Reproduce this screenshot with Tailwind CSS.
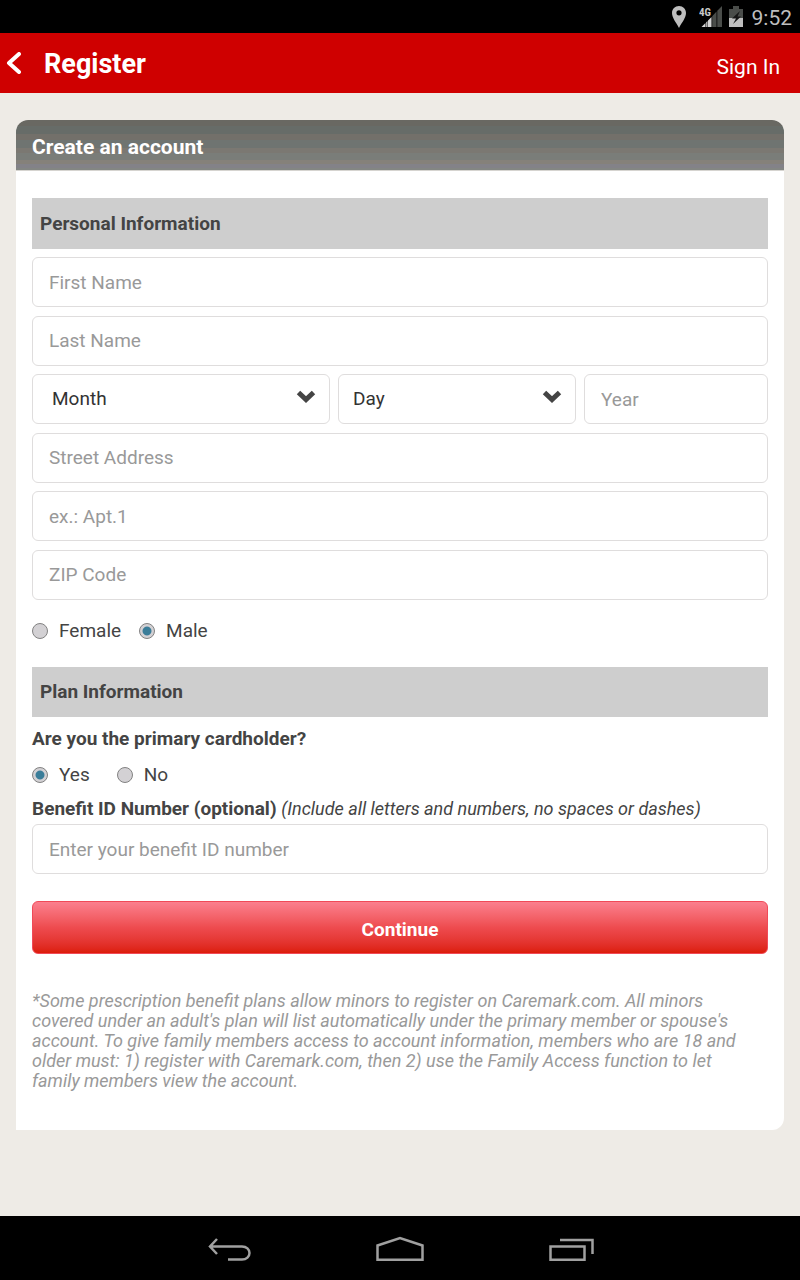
<!DOCTYPE html>
<html lang="en">
<head>
<meta charset="utf-8">
<meta name="viewport" content="width=device-width, initial-scale=1">
<title>Register</title>
<script src="https://cdn.jsdelivr.net/npm/@tailwindcss/browser@4"></script>
</head>
<body class="flex min-h-screen flex-col bg-[#eeebe6] font-['Roboto',sans-serif] text-[19px] leading-5 text-[#444]">

<!-- Status bar -->
<div class="flex h-[33px] items-center justify-end bg-black pr-2 text-[#bebebe]">
  <svg class="mr-3 h-6 w-4" viewBox="0 0 16 24" fill="#bebebe" aria-hidden="true"><path fill-rule="evenodd" d="M8 1C4 1 1 4 1 8c0 5 4 9 7 15 3-6 7-10 7-15 0-4-3-7-7-7zm0 4.200a2.600 2.600 0 1 1 0 5.200 2.600 2.600 0 0 1 0-5.200z"/></svg>
  <svg class="mr-[5px] h-6 w-6" viewBox="0 0 24 24" role="img" aria-label="4G signal">
    <path d="M13.200 11.300 17.500 6.500V22h-4.300zM18.300 5.700 23 1v21h-4.700z" fill="#4a4d4a"/>
    <path d="M2.500 22l4-4v4zM7.200 17.300 8.500 16v6H7.200zM9 15.500l3.500-3.500v10H9z" fill="#d6d6d6"/>
    <text x="0" y="11" font-size="11" font-weight="700" font-family="'Roboto Condensed','Roboto',sans-serif" fill="#c8c8c8" stroke="#000" stroke-width="2" paint-order="stroke">4G</text>
  </svg>
  <svg class="mr-2 h-6 w-4" viewBox="0 0 16 24" aria-hidden="true">
    <path d="M1 4h4V1h6v3h4v9H1z" fill="#4a4d4a"/><path d="M1 13h14v9H1z" fill="#bebebe"/>
    <path d="M12 6 4 13.500h4L5 19l8-7.500H9.500z" fill="#161616"/>
  </svg>
  <span class="pt-0.5 text-[21px]">9:52</span>
</div>

<!-- App header -->
<header class="flex h-[60px] items-center bg-[#cf0000] pr-5 pl-1.5 text-white">
  <button type="button" aria-label="Back" class="mr-[23px] w-[15px]">
    <svg class="h-[22px] w-[15px]" viewBox="0 0 15 22" fill="none" stroke="#fff" stroke-width="4" stroke-linecap="round" stroke-linejoin="round"><path d="M13 2 3 11l10 9"/></svg>
  </button>
  <h1 class="pt-0.5 text-[27px] leading-8 font-bold">Register</h1>
  <a href="#signin" class="ml-auto pt-2 text-[21px] leading-6">Sign In</a>
</header>

<main class="flex-1 px-4 pt-[27px] pb-8">
  <form class="overflow-hidden rounded-t-xl rounded-br-xl bg-white">
    <h2 class="flex h-[51px] items-center border-b border-[#d6d4d0] bg-[linear-gradient(#696862_6px,#676c68_6px_14px,#73706a_14px_20px,#6f7471_20px_28px,#7b7872_28px_33px,#7a7d79_33px_40px,#85817a_40px_44px,#838288_44px_48px,#838683_48px)] px-4 pt-1 text-[21px] leading-6 font-bold text-white">Create an account</h2>

    <div class="px-4 pt-[27px] pb-[39px]">
      <h3 class="flex h-[51px] items-center bg-[#cecece] px-2 font-bold">Personal Information</h3>

      <div class="mt-2 flex min-h-[343px] flex-col justify-between">
        <input type="text" aria-label="First Name" placeholder="First Name" class="h-[50px] w-full rounded-md border border-[#dfdddd] bg-white px-4 placeholder:text-[#999]">
        <input type="text" aria-label="Last Name" placeholder="Last Name" class="h-[50px] w-full rounded-md border border-[#dfdddd] bg-white px-4 placeholder:text-[#999]">
        <div class="grid grid-cols-[298fr_238fr_184fr] gap-2">
          <div class="relative">
            <select aria-label="Month" class="h-[50px] w-full appearance-none rounded-md border border-[#dfdddd] bg-white px-[19px] text-[#333]"><option>Month</option></select>
            <svg class="pointer-events-none absolute top-4 right-3.5 h-[14px] w-5" viewBox="0 0 20 14" fill="none" stroke="#444" stroke-width="5" aria-hidden="true"><path d="M2.500 2.500 10 9.500l7.500-7"/></svg>
          </div>
          <div class="relative">
            <select aria-label="Day" class="h-[50px] w-full appearance-none rounded-md border border-[#dfdddd] bg-white px-3.5 text-[#333]"><option>Day</option></select>
            <svg class="pointer-events-none absolute top-4 right-3.5 h-[14px] w-5" viewBox="0 0 20 14" fill="none" stroke="#444" stroke-width="5" aria-hidden="true"><path d="M2.500 2.500 10 9.500l7.500-7"/></svg>
          </div>
          <input type="text" aria-label="Year" placeholder="Year" class="h-[50px] w-full rounded-md border border-[#dfdddd] bg-white px-4 placeholder:text-[#999]">
        </div>
        <input type="text" aria-label="Street Address" placeholder="Street Address" class="h-[50px] w-full rounded-md border border-[#dfdddd] bg-white px-4 placeholder:text-[#999]">
        <input type="text" aria-label="Apartment" placeholder="ex.: Apt.1" class="h-[50px] w-full rounded-md border border-[#dfdddd] bg-white px-4 placeholder:text-[#999]">
        <input type="text" aria-label="ZIP Code" placeholder="ZIP Code" class="h-[50px] w-full rounded-md border border-[#dfdddd] bg-white px-4 placeholder:text-[#999]">
      </div>

      <div class="mt-[21px] flex gap-[18px]">
        <label class="flex items-center"><input type="radio" name="gender" class="mr-[11px] size-4 appearance-none rounded-full border border-[#828282] bg-[#d3d1d4] checked:bg-radial checked:from-[#3a7d99] checked:from-40% checked:to-[#d3d1d4] checked:to-50%">Female</label>
        <label class="flex items-center"><input type="radio" name="gender" checked class="mr-[11px] size-4 appearance-none rounded-full border border-[#828282] bg-[#d3d1d4] checked:bg-radial checked:from-[#3a7d99] checked:from-40% checked:to-[#d3d1d4] checked:to-50%">Male</label>
      </div>

      <h3 class="mt-[26px] flex h-[50px] items-center bg-[#cecece] px-2 font-bold">Plan Information</h3>

      <fieldset>
        <legend class="pt-3 font-bold">Are you the primary cardholder?</legend>
        <div class="mt-4 flex gap-[27px]">
          <label class="flex items-center"><input type="radio" name="cardholder" checked class="mr-[11px] size-4 appearance-none rounded-full border border-[#828282] bg-[#d3d1d4] checked:bg-radial checked:from-[#3a7d99] checked:from-40% checked:to-[#d3d1d4] checked:to-50%">Yes</label>
          <label class="flex items-center"><input type="radio" name="cardholder" class="mr-[11px] size-4 appearance-none rounded-full border border-[#828282] bg-[#d3d1d4] checked:bg-radial checked:from-[#3a7d99] checked:from-40% checked:to-[#d3d1d4] checked:to-50%">No</label>
        </div>
      </fieldset>

      <label for="benefit" class="mt-[14px] block"><b>Benefit ID Number (optional)</b> <i class="text-[18px]">(Include all letters and numbers, no spaces or dashes)</i></label>
      <input id="benefit" type="text" placeholder="Enter your benefit ID number" class="mt-[5px] block h-[50px] w-full rounded-md border border-[#dfdddd] bg-white px-4 placeholder:text-[#999]">

      <button type="submit" class="mt-[27px] block h-[53px] w-full rounded-md border border-[#f04a58] bg-linear-to-b from-[#fb7f8e] via-[#ee4b4f] to-[#dc1c08] pt-1 font-bold text-white">Continue</button>

      <p class="mt-[37px] pr-4 text-[18px] text-[#999] italic">*Some prescription benefit plans allow minors to register on Caremark.com. All minors covered under an adult's plan will list automatically under the primary member or spouse's account. To give family members access to account information, members who are 18 and older must: 1) register with Caremark.com, then 2) use the Family Access function to let family members view the account.</p>
    </div>
  </form>
</main>

<!-- System navigation -->
<nav class="flex h-16 items-center justify-center gap-[124px] bg-black pt-1">
  <button type="button" aria-label="Back"><svg class="h-7 w-12" viewBox="0 0 48 28" fill="none" stroke="#a0a0a0" stroke-width="2.500"><path d="M13 3 6 10.500 13 18M6 10.500h32c4.500 0 7.500 3 7.500 6.500s-3 6.500-7.500 6.500H24"/></svg></button>
  <button type="button" aria-label="Home"><svg class="h-7 w-12" viewBox="0 0 48 28" fill="none" stroke="#a0a0a0" stroke-width="2.500"><path d="M1.500 9.500 24 2l22.500 7.500v14.200h-45z"/></svg></button>
  <button type="button" aria-label="Recent apps"><svg class="h-7 w-12" viewBox="0 0 48 28" fill="none" stroke="#a0a0a0" stroke-width="2.500"><path d="M2.500 10.500h34v13.200h-34zM12 4h32.500v14"/></svg></button>
</nav>
</body>
</html>
